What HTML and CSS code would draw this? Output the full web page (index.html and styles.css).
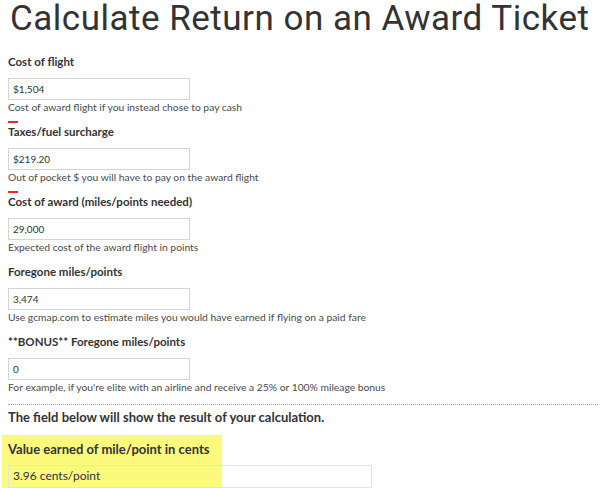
FILE: index.html
```html
<!DOCTYPE html>
<html>
<head>
<meta charset="utf-8">
<link rel="stylesheet" href="styles.css">
</head>
<body>
<div class="page">
  <h1 class="title">Calculate Return on an Award Ticket</h1>
  <div class="field marked">
    <label class="label">Cost of flight</label>
    <div class="input">$1,504</div>
    <div class="help">Cost of award flight if you instead chose to pay cash</div>
  </div>
  <div class="field marked">
    <label class="label">Taxes/fuel surcharge</label>
    <div class="input">$219.20</div>
    <div class="help">Out of pocket $ you will have to pay on the award flight</div>
  </div>
  <div class="field">
    <label class="label">Cost of award (miles/points needed)</label>
    <div class="input">29,000</div>
    <div class="help">Expected cost of the award flight in points</div>
  </div>
  <div class="field">
    <label class="label">Foregone miles/points</label>
    <div class="input">3,474</div>
    <div class="help">Use gcmap.com to estimate miles you would have earned if flying on a paid fare</div>
  </div>
  <div class="field last">
    <label class="label">**BONUS** Foregone miles/points</label>
    <div class="input">0</div>
    <div class="help">For example, if you're elite with an airline and receive a 25% or 100% mileage bonus</div>
  </div>
  <div class="divider"></div>
  <div class="note">The field below will show the result of your calculation.</div>
  <div class="result">
    <div class="highlight"></div>
    <label class="label big">Value earned of mile/point in cents</label>
    <div class="input wide">3.96 cents/point</div>
  </div>
</div>
</body>
</html>
```

FILE: styles.css
```css
html, body {
  margin: 0;
  padding: 0;
  background: #ffffff;
}
body {
  font-family: "Lato", "Open Sans", sans-serif;
  color: #333333;
  overflow: hidden;
}
.page {
  padding: 0 8px;
  display: flex;
  flex-direction: column;
}
.title {
  margin: 0 -8px 0 0;
  font-family: "Roboto", sans-serif;
  font-weight: 400;
  font-size: 35px;
  line-height: 38px;
  height: 54px;
  color: #333333;
  letter-spacing: 0.5px;
  white-space: nowrap;
  padding-left: 2px;
}
.field {
  display: flex;
  flex-direction: column;
  padding-bottom: 10px;
}
.field.marked {
  padding-bottom: 0;
}
.field.marked::after {
  content: "";
  display: block;
  width: 10px;
  height: 2px;
  background: #e8262d;
  margin: 7px 0 1px;
}
.label {
  font-weight: 700;
  font-size: 11.5px;
  line-height: 16px;
  height: 16px;
  margin-bottom: 8px;
  color: #333;
  position: relative;
}
.label.big {
  font-size: 13px;
}
.input {
  box-sizing: border-box;
  width: 182px;
  height: 22px;
  border: 1px solid #d4d4d4;
  background: #fff;
  font-size: 10px;
  line-height: 20px;
  padding: 0 4px;
  color: #333;
}
.help {
  font-size: 10.3px;
  line-height: 14px;
  height: 14px;
  color: #4a4a4a;
  white-space: nowrap;
}
.divider {
  border-top: 1px dotted #a8a8a8;
  margin-right: -6px;
  height: 0;
}
.note {
  font-weight: 700;
  font-size: 13px;
  line-height: 16px;
  margin-top: 4px;
  height: 32px;
  color: #333;
  white-space: nowrap;
}
.result {
  position: relative;
  display: flex;
  flex-direction: column;
}
.result .label {
  margin-bottom: 8px;
}
.highlight {
  position: absolute;
  left: -6px;
  top: -6px;
  width: 220px;
  height: 60px;
  background: #fbfa7c;
}
.input.wide {
  width: 364px;
  height: 23px;
  position: relative;
  background: transparent;
  border-color: #e2e2e2;
  font-size: 12px;
}
```
